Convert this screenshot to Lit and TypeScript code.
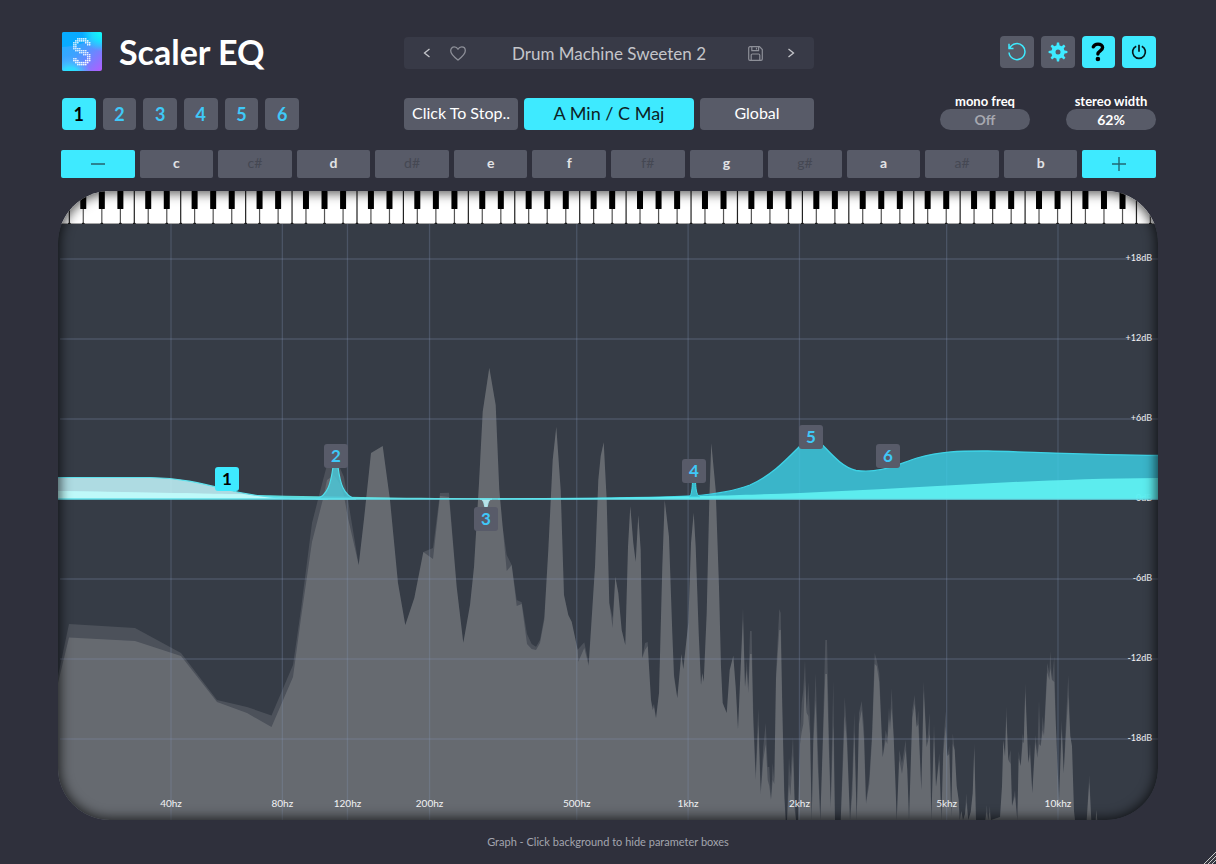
import { LitElement, html, svg, css } from "lit";
import { customElement, state } from "lit/decorators.js";
import { classMap } from "lit/directives/class-map.js";
import { styleMap } from "lit/directives/style-map.js";

const PLOT_W = 1100;
const PLOT_H = 596;
const OCTAVE = 111.35;
const ZERO_Y = 275;
const DB = 13.333;

const freqX = (hz: number) => 113 + OCTAVE * Math.log2(hz / 40);
const gainY = (db: number) => ZERO_Y - db * DB;
const pctX = (x: number) => `${((x / PLOT_W) * 100).toFixed(3)}%`;
const pctY = (y: number) => `${((y / PLOT_H) * 100).toFixed(3)}%`;

const FREQS: [number, string][] = [
  [40, "40hz"], [80, "80hz"], [120, "120hz"], [200, "200hz"], [500, "500hz"],
  [1000, "1khz"], [2000, "2khz"], [5000, "5khz"], [10000, "10khz"],
];
const GAINS = [18, 12, 6, 0, -6, -12, -18];
const NOTES = ["c", "c#", "d", "d#", "e", "f", "f#", "g", "g#", "a", "a#", "b"];

const BANDS: { id: number; x: number; y: number }[] = [
  { id: 1, x: 169, y: 255 },
  { id: 2, x: 278, y: 232 },
  { id: 3, x: 428, y: 295 },
  { id: 4, x: 636, y: 247 },
  { id: 5, x: 753, y: 213 },
  { id: 6, x: 830, y: 232 },
];

/* Spectrum samples: x, peak-hold y, current-level y (when it differs). */
const SPECTRUM: number[][] = [
  [0, 452, 459], [11, 400, 413.5], [77, 404, 417], [123, 429, 432], [159, 476, 478], [189, 483, 489],
  [213.5, 491.5, 503], [235, 441, 453], [243, 385, 394], [254, 299, 318], [265, 256, 275], [269, 241, 256],
  [276, 236, 251], [282, 244, 260], [286, 253, 272], [290, 276, 294], [300.7, 341], [306, 295], [313, 229], [324.7, 222],
  [332, 276], [340, 359], [347.3, 401], [356.3, 374], [365.3, 328], [375, 324, 335], [382, 269, 272],
  [391, 268.7, 273], [398.7, 363], [405.3, 418.7], [412, 381], [416, 343], [421, 259], [424.7, 187.7],
  [431.3, 143.7], [437.7, 181], [441.3, 266], [444.7, 303], [448.7, 331, 347], [453.7, 341], [458.7, 376, 382],
  [463.7, 378.3, 380], [469, 410, 420], [473.7, 420, 425], [478, 422.7, 426], [482, 416, 419], [486.3, 392.7, 396],
  [490.3, 326], [494.7, 236], [498.3, 202.7], [502.7, 266], [506, 371], [510.3, 391], [513.7, 397.7], [519.7, 426],
  [520.3, 425, 437.7], [526.3, 418.3, 424], [530.7, 439, 441.7], [537, 342.7], [540.3, 256], [542.7, 232],
  [545.7, 218.3], [548.7, 276], [551.3, 379], [554.7, 394, 404], [557.3, 352.7], [560.3, 369], [563.7, 406],
  [567.3, 421], [570, 322.7], [572.3, 282], [575.3, 319], [577.7, 337.7], [580.3, 291], [582.7, 326], [584.3, 434],
  [587, 419, 426], [589.7, 418, 422], [593, 476], [594.5, 483, 486], [596, 480, 483], [598, 494], [601, 469], [604.3, 343], [606.7, 276], [611, 312.7],
  [614.3, 409], [616, 450, 453], [619.3, 474], [623.3, 430], [625.3, 445], [630.3, 399], [633, 319], [635.7, 288.7],
  [637.7, 322.7], [640.7, 409], [643, 461], [644.3, 449], [645.7, 457.7], [648.7, 389], [651.3, 276], [653.3, 219],
  [657.7, 266], [661, 362.7], [663, 442.7], [664.7, 479], [668.7, 489], [671.7, 446], [675.3, 431.7], [677.7, 463],
  [680, 505], [682.7, 443], [685, 383, 394], [687, 463], [688.7, 436, 446], [690.3, 463, 469], [692, 407, 430],
  [693.7, 407, 430], [695.3, 489, 500], [697.7, 549, 556], [700.3, 484, 500], [702.7, 566, 570], [705.3, 523, 536],
  [707.7, 499, 520], [709.7, 543, 556], [711.3, 543, 562], [713, 574, 576], [714.7, 539, 556], [716.3, 556, 560],
  [718, 449, 455], [721.3, 385, 406], [722.7, 389, 406], [724.3, 479, 486], [726.3, 566, 574], [727.7, 596],
  [729, 596], [731, 533, 560], [732.3, 553, 572], [735, 512, 530], [736.7, 573, 586], [738, 596], [740, 596],
  [742, 509, 520], [743.7, 479, 508], [745.3, 466, 500], [747, 436, 456], [748.7, 489], [750.3, 458, 492],
  [752, 493, 510], [753.7, 596], [755.3, 509, 520], [757.7, 449, 476], [759.7, 519, 540], [762.3, 596],
  [764.7, 516, 524], [767.3, 416, 450], [769, 416, 450], [770.7, 499, 520], [772.7, 579, 584], [775.3, 456, 500],
  [777, 596], [782.7, 596], [784.7, 533, 548], [786.7, 473, 492], [789, 509, 520], [792, 596], [794.3, 553, 570],
  [796.3, 488, 508], [798.7, 596], [801, 489, 500], [803.7, 477, 486], [806, 503, 516], [808, 577, 580],
  [811.3, 553, 560], [814, 509, 516], [816.7, 429, 440], [818.7, 436, 442], [821.3, 449, 458], [824.7, 533],
  [827.7, 506, 516], [829.3, 513, 520], [831, 483, 494], [832, 499, 506], [833.7, 464, 484], [835.7, 513], [837.7, 566],
  [838.7, 596], [841.3, 526, 536], [844, 539, 550], [847.7, 516, 526], [849.3, 546], [851, 596], [854.3, 486, 494],
  [856.7, 471, 480], [858.7, 503], [860.3, 486, 500], [863.3, 566], [865.7, 457, 466], [868.7, 523], [871.7, 489, 510],
  [873.3, 596], [876, 499, 510], [878, 563], [881.3, 529, 536], [883.3, 596], [885.3, 522, 530], [887.7, 487, 502],
  [889.3, 532], [891.3, 522, 530], [893.3, 592], [894.7, 509, 520], [896.7, 526], [898.7, 562], [900.7, 576],
  [901.7, 596], [903.3, 587], [905, 596], [907, 590], [908.3, 569, 578], [910.3, 596], [912.7, 588], [914.7, 569],
  [916.3, 519, 524], [918, 596], [927.3, 596], [928.7, 581, 588], [930.3, 596], [931.7, 582, 588], [933, 596],
  [942, 593], [944, 562], [945.3, 516], [947, 532], [948.3, 482, 492], [950.3, 536], [952.7, 526, 540], [954, 582],
  [957, 566, 572], [959.3, 596], [960.7, 527, 534], [962.7, 542], [964.7, 509, 518], [965.7, 519], [967.3, 459, 468],
  [970.3, 539], [972, 519, 530], [974.3, 569], [977.3, 511, 518], [979.3, 529, 534], [981, 476, 520], [982.7, 522],
  [984.7, 492, 506], [986, 506, 512], [989.3, 439, 448], [991.3, 449, 456], [992.3, 427, 444], [994, 456],
  [996.3, 432, 458], [997.7, 496], [999.7, 546], [1001, 576], [1003.7, 496, 504], [1005.7, 549], [1008, 496, 508],
  [1010.3, 451, 472], [1012.3, 512], [1014, 522], [1016, 587], [1017, 596], [1028.7, 596], [1031.3, 551, 558],
  [1033.3, 596], [1037.7, 596], [1038.3, 586], [1039.3, 596], [1100, 596],
];

const area = (col: number) =>
  `M0 ${PLOT_H} ` +
  SPECTRUM.map((p) => `L${p[0]} ${p[col] ?? p[1]}`).join(" ") +
  ` L${PLOT_W} ${PLOT_H}Z`;

const HIGH_CURVE =
  "M440 275 C540 274.500 600 274 634 272 C660 270 676 267 692 261 C712 252 724 240 741 223 C748 216 758 215 765 221.500 C776 233 785 243 798 246.500 C822 250 840 240 859 234 C885 226.500 905 227 930 227 C970 228 1040 231 1100 231.500";
const LOW_CURVE =
  "M0 253.500 H92 C122 254 142 259 166 265 C194 272 222 275.500 270 275";

const BLACK_KEYS = [1, 3, 6, 8, 10];
const SPLITS = [1.5, 3.5, 5, 6.5, 8.5, 10.5, 12];

const S_DOTS = [
  "..#####..", ".#######.", "###...###", "##.....##", "##.......", "####.....", ".######..",
  "...#####.", ".....####", ".......##", "##.....##", "###...###", ".#######.", "..#####..",
];

const logo = html`<svg class="logo" viewBox="0 0 40 39" aria-hidden="true">
  <defs>
    <linearGradient id="lg" x1="0" y1="0" x2="1" y2="1">
      <stop offset="0" stop-color="#1cb4ff" />
      <stop offset="0.45" stop-color="#3da2ff" />
      <stop offset="1" stop-color="#b45cff" />
    </linearGradient>
    <radialGradient id="lc" cx="1" cy="0" r="0.5">
      <stop offset="0" stop-color="#10fff4" />
      <stop offset="0.5" stop-color="#1bdcff" />
      <stop offset="1" stop-color="#1bdcff" stop-opacity="0" />
    </radialGradient>
    <radialGradient id="lb" cx="0.2" cy="1.15" r="0.55">
      <stop offset="0" stop-color="#0ffcff" />
      <stop offset="0.45" stop-color="#35d5ff" />
      <stop offset="1" stop-color="#5aa8ff" stop-opacity="0" />
    </radialGradient>
  </defs>
  <rect width="40" height="39" rx="2" fill="url(#lg)" />
  <path d="M0 2a2 2 0 0 1 2-2h28c2 6-8 14-30 15z" fill="#00aaff" opacity="0.8" />
  <rect width="40" height="39" rx="2" fill="url(#lc)" />
  <rect width="40" height="39" rx="2" fill="url(#lb)" />
  ${S_DOTS.flatMap((row, r) =>
    [...row].map((c, i) =>
      c === "#" ? svg`<circle cx=${11.9 + i * 1.98} cy=${6.9 + r * 1.98} r="0.82" fill="#fff" />` : null
    )
  )}
</svg>`;

const iconPrev = html`<svg width="8" height="10" viewBox="0 0 8 10" aria-hidden="true"><path d="M6.500 1 1.500 5l5 4" fill="none" stroke="#c4c5ca" stroke-width="1.300" /></svg>`;
const iconNext = html`<svg width="8" height="10" viewBox="0 0 8 10" aria-hidden="true"><path d="m1.500 1 5 4-5 4" fill="none" stroke="#c4c5ca" stroke-width="1.300" /></svg>`;
const iconHeart = html`<svg width="16" height="15" viewBox="0 0 16 15" aria-hidden="true"><path d="M8 14C4.500 11.200.700 8.300.700 4.700.700 2.500 2.300.900 4.300.900 5.900.900 7.200 1.700 8 3.200 8.800 1.700 10.100.900 11.700.900c2 0 3.600 1.600 3.600 3.800C15.300 8.300 11.500 11.200 8 14z" fill="none" stroke="#8d8f98" stroke-width="1.300" stroke-linejoin="round" /></svg>`;
const iconSave = html`<svg width="15" height="15" viewBox="0 0 15 15" aria-hidden="true"><path d="M2 .7h9.500l2.800 2.800V13a1.300 1.300 0 0 1-1.300 1.300H2A1.300 1.300 0 0 1 .7 13V2A1.300 1.300 0 0 1 2 .7zM3.800.7v4h6.800v-4M8.500 1.800v1.800M3.200 14.300V9.200a1.200 1.200 0 0 1 1.200-1.200h6.200a1.200 1.200 0 0 1 1.200 1.200v5.100" fill="none" stroke="#8d8f98" stroke-width="1.200" /></svg>`;
const iconReset = html`<svg width="20" height="20" viewBox="0 0 20 20" aria-hidden="true"><path d="M2.700 6.200A8 8 0 1 1 2 10.500M2 1.800v4.700h4.500" fill="none" stroke="#3eeaff" stroke-width="1.500" /></svg>`;
const iconGear = html`<svg width="20" height="20" viewBox="0 0 20 20" aria-hidden="true">
  <g fill="#3eeaff">
    ${[0, 45, 90, 135, 180, 225, 270, 315].map(
      (a) => svg`<path transform=${`rotate(${a} 10 10)`} d="M8.300 4.500 8.900.600h2.200l.6 3.900z" />`
    )}
    <path fill-rule="evenodd" d="M10 3.300a6.700 6.700 0 1 0 0 13.400 6.700 6.700 0 0 0 0-13.400zm0 4.200a2.500 2.500 0 1 1 0 5 2.500 2.500 0 0 1 0-5z" />
  </g>
</svg>`;
const iconHelp = html`<svg width="14" height="20" viewBox="0 0 14 20" aria-hidden="true"><path d="M2.300 4.800C3 3 4.700 2.100 7 2.100c2.700 0 4.600 1.300 4.600 3.500 0 3.200-4.700 3.200-4.700 6.400" fill="none" stroke="#000" stroke-width="3.400" stroke-linecap="round" /><circle cx="6.900" cy="17" r="2.300" /></svg>`;
const iconPower = html`<svg width="16" height="16" viewBox="0 0 16 16" aria-hidden="true"><path d="M5.200 2.200a6.400 6.400 0 1 0 5.600 0M8 .8v7" fill="none" stroke="#06181c" stroke-width="1.700" /></svg>`;
const iconMinus = html`<svg width="16" height="16" viewBox="0 0 16 16" aria-hidden="true"><path d="M1 8h14" stroke="#2a7885" stroke-width="1.800" /></svg>`;
const iconPlus = html`<svg width="16" height="16" viewBox="0 0 16 16" aria-hidden="true"><path d="M1 8h14M8 1v14" stroke="#226874" stroke-width="1.400" /></svg>`;

@customElement("eq-graph")
class EqGraph extends LitElement {
  static properties = { selected: { type: Number } };
  declare selected: number;

  static styles = css`
    :host {
      display: grid;
      grid-template-rows: 33px 1fr;
      position: relative;
      overflow: hidden;
      border-radius: 52px;
      background: #363c46;
    }
    .shade {
      position: absolute;
      inset: 0;
      border-radius: inherit;
      box-shadow: inset 0 0 12px 2px rgba(0, 0, 0, 0.7);
      pointer-events: none;
    }
    .keys {
      display: block;
      width: 100%;
      height: 33px;
      background: #fff;
    }
    .plot {
      position: relative;
      min-height: 200px;
    }
    .layer {
      position: absolute;
      inset: 0;
      width: 100%;
      height: 100%;
    }
    .tick {
      position: absolute;
      font-size: 10px;
      line-height: 12px;
      color: #f2f3f5;
    }
    .freq {
      bottom: 11px;
      transform: translateX(-50%);
    }
    .gain {
      right: 6px;
      font-size: 9px;
      transform: translateY(-50%);
    }
    .band {
      position: absolute;
      width: 24px;
      height: 24px;
      padding: 0;
      border: 0;
      border-radius: 3px;
      transform: translate(-50%, -50%);
      background: #585b69;
      color: #3fc8f8;
      font: 700 17px/24px Lato, sans-serif;
      cursor: pointer;
    }
    .band.on {
      background: #3eeaff;
      color: #000;
    }
  `;

  private keyboard() {
    const semi = OCTAVE / 12;
    const octaves = Array.from({ length: 11 }, (_, i) => 76.3 + (i - 1) * OCTAVE);
    return html`<svg class="keys" viewBox="0 0 1100 33" preserveAspectRatio="none" aria-hidden="true">
      ${octaves.map(
        (o) => svg`
        ${SPLITS.map(
          (s) => svg`<rect x=${o + s * semi - 0.6} y="0" width="1.200" height="33" fill=${s % 1 ? "#555" : "#222"} />
          <circle cx=${o + s * semi} cy="33" r="1.500" fill="#222" />`
        )}
        ${BLACK_KEYS.map(
          (k) => svg`<rect x=${o + (k + 0.5) * semi - 3} y="0" width="6" height="18" rx="0.500" fill="#000" />`
        )}`
      )}
      <rect x="0" y="32" width="1100" height="1" fill="#000" opacity="0.35" />
    </svg>`;
  }

  render() {
    return html`
      ${this.keyboard()}
      <div class="plot">
        <svg class="layer" viewBox="0 0 1100 596" preserveAspectRatio="none" aria-hidden="true">
          <path d=${area(1)} fill="#fff" opacity="0.11" />
          <path d=${area(2)} fill="#e8e8e4" opacity="0.17" />
          <g stroke="#8496b8" stroke-opacity="0.270" stroke-width="1.300">
            ${FREQS.map(([f]) => svg`<line x1=${freqX(f)} x2=${freqX(f)} y1="0" y2="596" />`)}
            ${GAINS.map((g) => svg`<line x1="2" x2="1100" y1=${gainY(g)} y2=${gainY(g)} />`)}
          </g>
        </svg>
        ${FREQS.map(([f, t]) => html`<span class="tick freq" style=${styleMap({ left: pctX(freqX(f)) })}>${t}</span>`)}
        ${GAINS.map(
          (g) => html`<span class="tick gain" style=${styleMap({ top: pctY(gainY(g) - 1) })}>${g > 0 ? "+" : ""}${g}dB</span>`
        )}
        <svg class="layer" viewBox="0 0 1100 596" preserveAspectRatio="none" aria-hidden="true">
          <path d="${HIGH_CURVE} V275Z" fill="#3ccfe6" fill-opacity="0.820" />
          <path d=${HIGH_CURVE} fill="none" stroke="#3ed3e6" stroke-width="1.300" />
          <path d="M0 267 C200 271 300 274 440 274.500 C600 274 660 272 742 269 C850 265 960 255 1100 254 V275 H0Z" fill="#63f6f5" fill-opacity="0.850" />
          <path d="${LOW_CURVE} H0Z" fill="#c2f6fb" fill-opacity="0.860" />
          <path d="M0 267 C100 268 150 270 185 270 C210 274 240 275 260 275 H0Z" fill="#bffaf9" fill-opacity="0.850" />
          <path d=${LOW_CURVE} fill="none" stroke="#5fe3ee" stroke-width="1.200" />
          <path d="M258 275 C270 272 273 258 275 243 H280 C282 258 285 272 298 275Z" fill="#4cc6d6" fill-opacity="0.850" stroke="#4fdfec" stroke-width="1.200" />
          <path d="M631 273 C634 271 634 264 634.500 258 H637.500 C638 264 638 271 642 273Z" fill="#3cb9cb" stroke="#3eddea" />
          <path d="M422 275 C426 276 426 280 427 284 H429 C430 280 430 276 434 275Z" fill="#b9e3e8" stroke="#a8e6ec" />
          <line x1="0" x2="1100" y1="275" y2="275" stroke="#62dfe8" stroke-width="1.500" />
        </svg>
        ${BANDS.map(
          (b) => html`<button
            class=${classMap({ band: true, on: b.id === this.selected })}
            style=${styleMap({ left: pctX(b.x), top: pctY(b.y) })}
            @click=${() => this.dispatchEvent(new CustomEvent("pick", { detail: b.id }))}
          >${b.id}</button>`
        )}
      </div>
      <div class="shade"></div>
    `;
  }
}

@customElement("app-root")
class AppRoot extends LitElement {
  @state() selected = 1;

  static styles = css`
    :host {
      display: flex;
      flex-direction: column;
      position: relative;
      box-sizing: border-box;
      min-height: 100vh;
      padding: 32px 58px 0;
      background: #2f303c;
      color: #fff;
      font-family: Lato, sans-serif;
    }
    button,
    input {
      font: inherit;
      color: inherit;
      border: 0;
      padding: 0;
      margin: 0;
      box-sizing: border-box;
    }
    button {
      display: flex;
      align-items: center;
      justify-content: center;
      background: #585b68;
      border-radius: 4px;
      cursor: pointer;
    }
    .bar {
      display: grid;
      grid-template-columns: 1fr 410px 1fr;
      align-items: center;
      padding: 0 2px 0 4px;
    }
    .top {
      height: 39px;
      margin-bottom: 27px;
    }
    .mid {
      height: 32px;
      margin-bottom: 20px;
    }
    .brand {
      display: flex;
      align-items: center;
      gap: 17px;
    }
    .logo {
      width: 40px;
      height: 39px;
    }
    h1 {
      margin: 0;
      font-size: 34px;
      line-height: 39px;
      font-weight: 700;
    }
    .preset {
      display: grid;
      grid-template-columns: 46px 16px 1fr 26px 46px;
      height: 32px;
      margin-top: 3px;
      border-radius: 4px;
      background: #383a47;
    }
    .preset button {
      background: none;
      color: #c4c5ca;
    }
    .preset .name {
      padding-left: 10px;
      font-size: 17px;
    }
    .tools {
      justify-self: end;
      display: grid;
      grid-template-columns: repeat(4, 1fr);
      gap: 7px;
      width: 156px;
      height: 32px;
    }
    .bands {
      display: grid;
      grid-template-columns: repeat(6, 1fr);
      gap: 7px;
      width: 237px;
      height: 32px;
    }
    .bands button {
      color: #3fc8f8;
      font-size: 18px;
      font-weight: 700;
    }
    button.on,
    .bands button.on {
      background: #3eeaff;
      color: #000;
    }
    .modes {
      display: grid;
      grid-template-columns: 114px 1fr 114px;
      gap: 6px;
      height: 32px;
    }
    .modes button {
      padding-bottom: 3px;
      font-size: 16px;
      white-space: nowrap;
    }
    .modes .scale {
      font-size: 18px;
      color: #0d2226;
    }
    .fields {
      justify-self: end;
      display: flex;
      gap: 36px;
    }
    .field {
      display: flex;
      flex-direction: column;
      align-items: center;
      width: 90px;
      margin-top: -4px;
    }
    .field label {
      font-size: 13px;
      line-height: 14px;
      font-weight: 700;
      white-space: nowrap;
    }
    .field input {
      width: 90px;
      height: 21px;
      margin-top: 1px;
      border-radius: 11px;
      background: #585b68;
      font-size: 14px;
      font-weight: 700;
      text-align: center;
    }
    .field .off {
      color: #a6a8b0;
    }
    .notes {
      display: grid;
      grid-template-columns: repeat(14, 1fr);
      gap: 5px;
      height: 28px;
      margin-bottom: 13px;
      padding: 0 2px 0 3px;
    }
    .notes button {
      border-radius: 2px;
      padding-bottom: 3px;
      font-size: 14px;
      font-weight: 700;
      color: #e2e3e6;
    }
    .notes .on {
      padding-bottom: 0;
    }
    .notes .sharp {
      color: #454853;
      font-weight: 400;
    }
    eq-graph {
      flex: 1;
    }
    footer {
      height: 44px;
      line-height: 44px;
      text-align: center;
      font-size: 11px;
      color: #a3a5ae;
    }
    .grip {
      position: absolute;
      right: 0;
      bottom: 0;
    }
  `;

  render() {
    const pick = (id: number) => (this.selected = id);
    return html`
      <header class="bar top">
        <div class="brand">${logo}<h1>Scaler EQ</h1></div>
        <div class="preset">
          <button aria-label="Previous preset">${iconPrev}</button>
          <button aria-label="Favourite">${iconHeart}</button>
          <button class="name">Drum Machine Sweeten 2</button>
          <button aria-label="Save preset">${iconSave}</button>
          <button aria-label="Next preset">${iconNext}</button>
        </div>
        <div class="tools">
          <button aria-label="Reset">${iconReset}</button>
          <button aria-label="Settings">${iconGear}</button>
          <button class="on" aria-label="Help">${iconHelp}</button>
          <button class="on" aria-label="Power">${iconPower}</button>
        </div>
      </header>
      <div class="bar mid">
        <div class="bands">
          ${BANDS.map(
            (b) => html`<button class=${classMap({ on: b.id === this.selected })} @click=${() => pick(b.id)}>${b.id}</button>`
          )}
        </div>
        <div class="modes">
          <button>Click To Stop..</button>
          <button class="on scale">A Min / C Maj</button>
          <button>Global</button>
        </div>
        <div class="fields">
          <div class="field">
            <label for="mono">mono freq</label>
            <input id="mono" class="off" type="text" value="Off" />
          </div>
          <div class="field">
            <label for="width">stereo width</label>
            <input id="width" type="text" value="62%" />
          </div>
        </div>
      </div>
      <div class="notes">
        <button class="on" aria-label="Transpose down">${iconMinus}</button>
        ${NOTES.map((n) => html`<button class=${classMap({ sharp: n.length > 1 })}>${n}</button>`)}
        <button class="on" aria-label="Transpose up">${iconPlus}</button>
      </div>
      <eq-graph .selected=${this.selected} @pick=${(e: CustomEvent) => pick(e.detail)}></eq-graph>
      <footer>Graph - Click background to hide parameter boxes</footer>
      <svg class="grip" width="12" height="12" viewBox="0 0 12 12" aria-hidden="true">
        <path d="M0 12 12 0M4 12l8-8M8 12l4-4" stroke="#c9c9c9" stroke-width="1" />
        <path d="M1.500 12 12 1.500M5.500 12 12 5.500" stroke="#555" stroke-width="0.800" />
      </svg>
    `;
  }
}
